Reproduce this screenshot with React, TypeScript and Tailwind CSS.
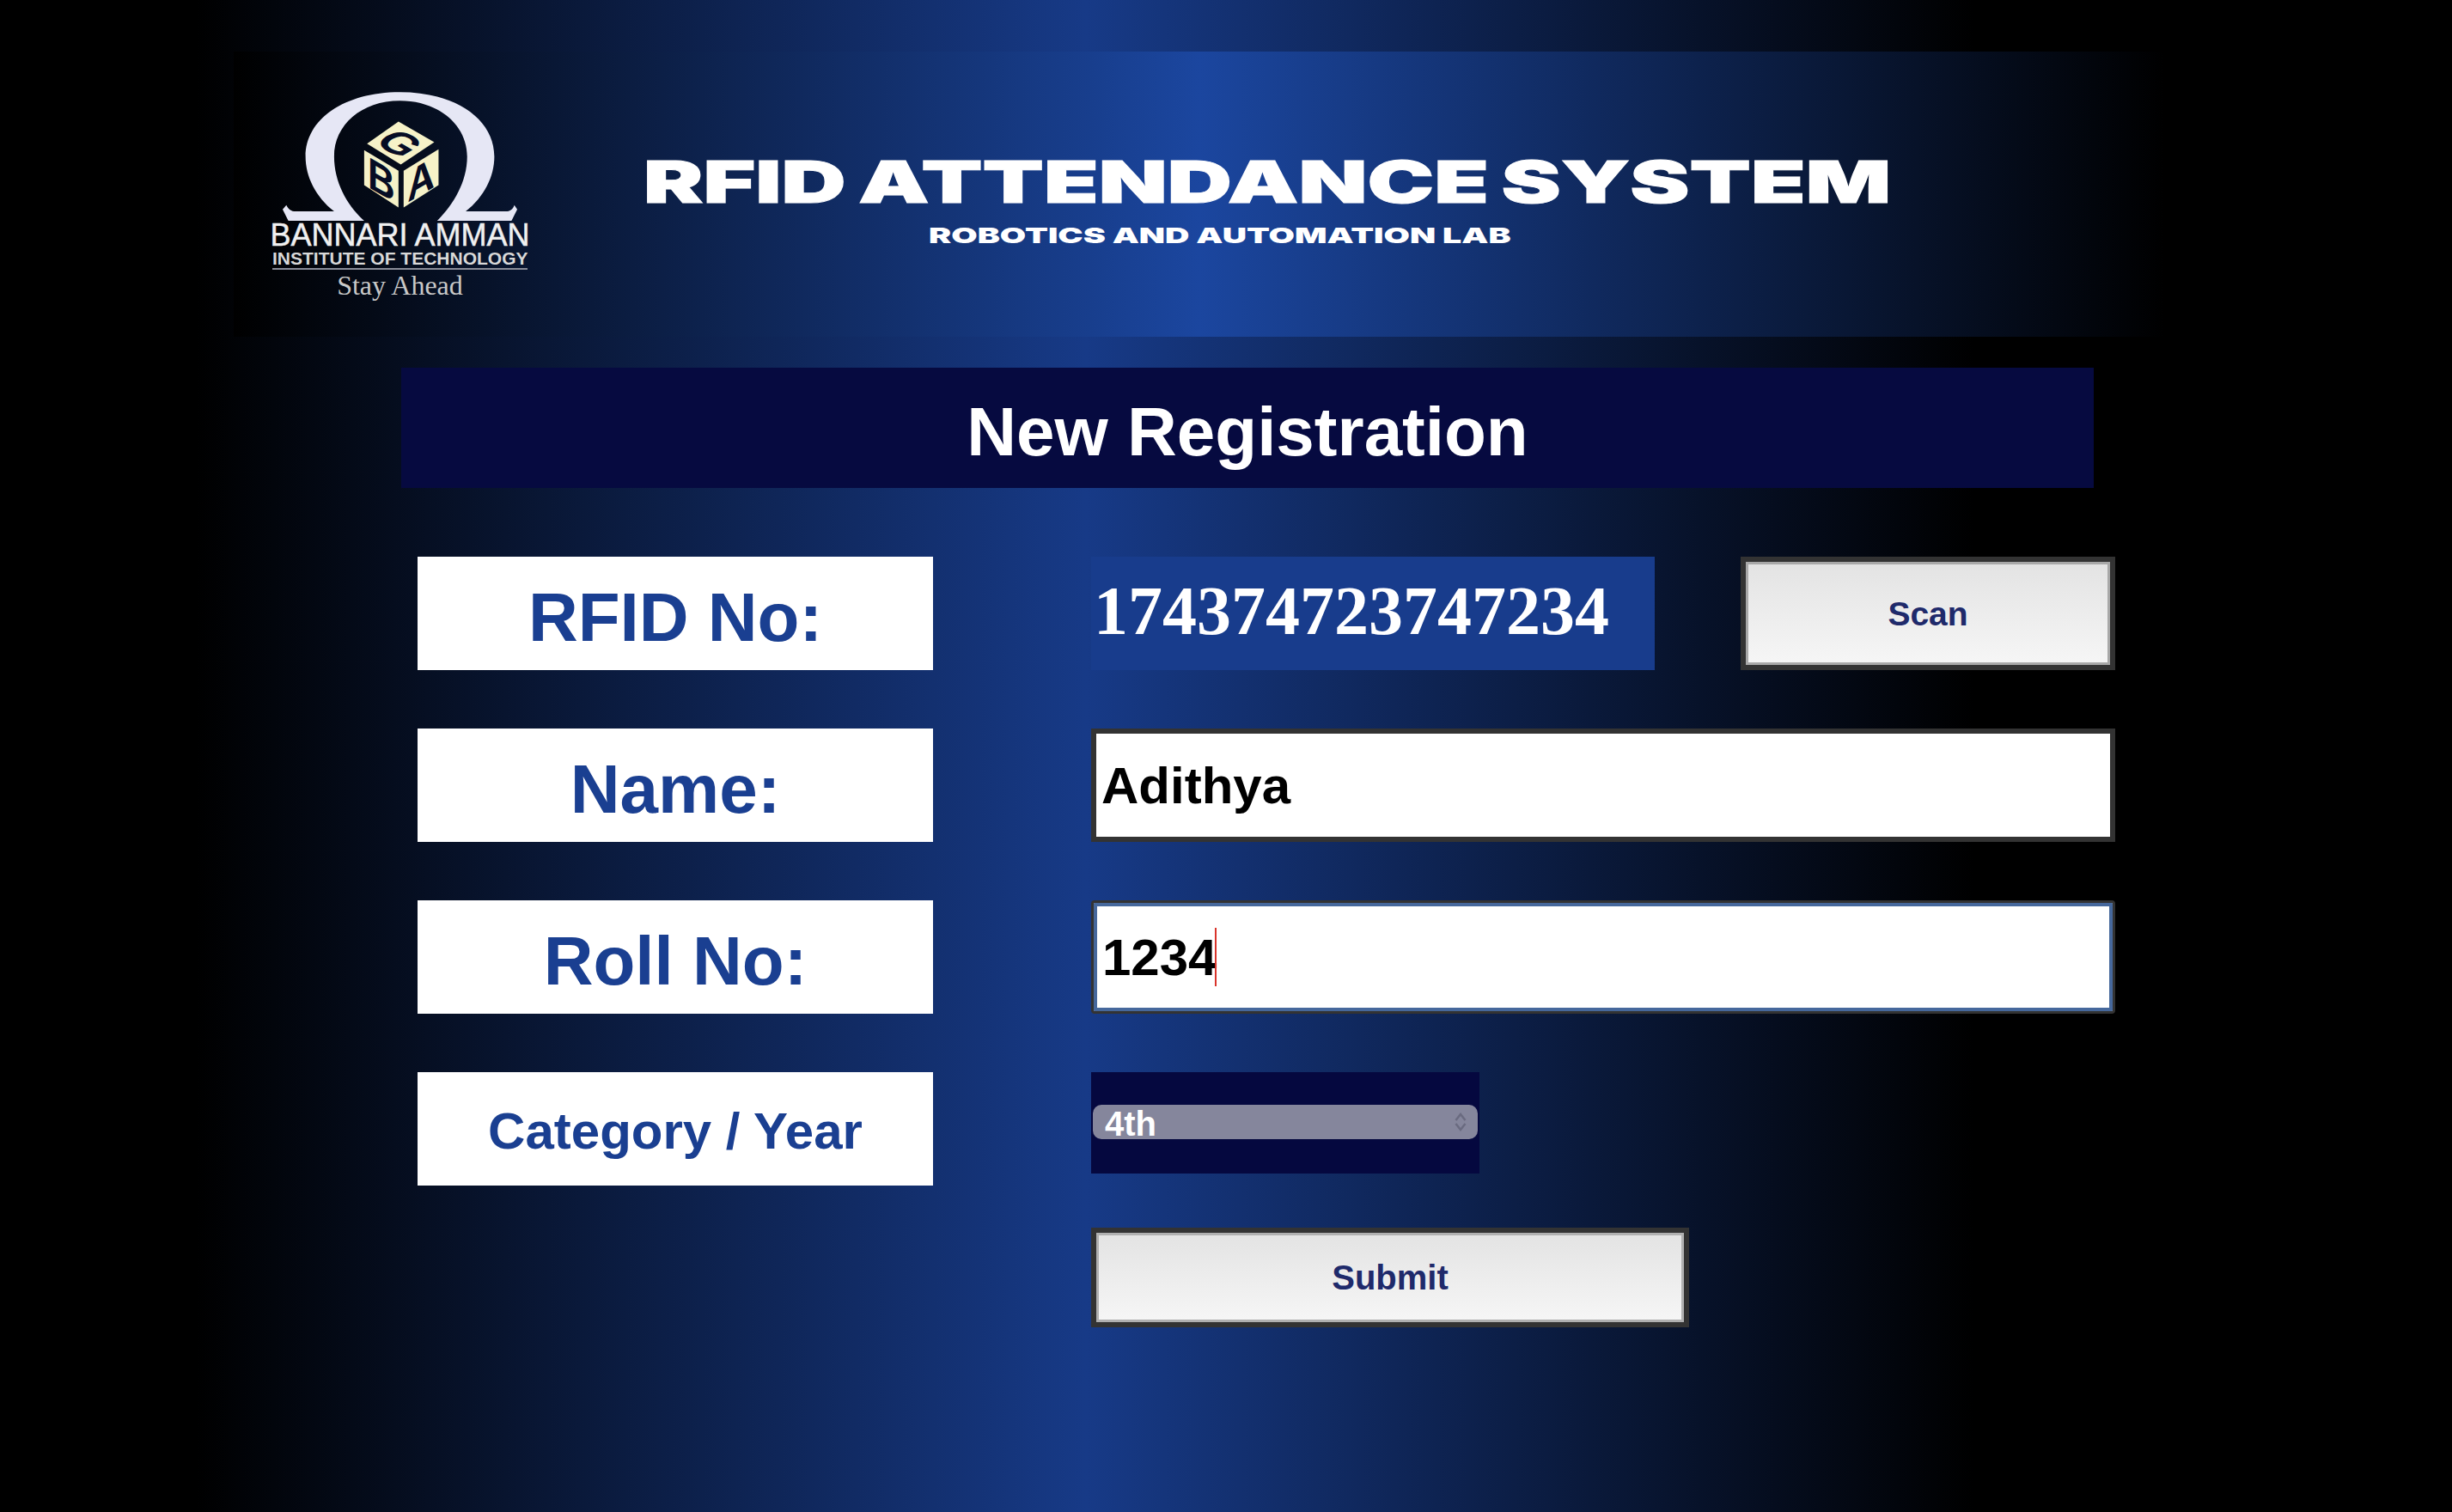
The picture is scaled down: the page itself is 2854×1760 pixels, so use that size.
const FormLabel = ({ text, small }: { text: string; small?: boolean }) => (
  <div className={`w-[600px] h-[132px] bg-white flex items-center justify-center font-bold text-[#1a3f91] ${small ? "text-[60px] pt-1.5" : "text-[80px] pt-[10px]"}`}>
    {text}
  </div>
);

const Logo = () => (
  <div className="w-[297px] flex flex-col items-center text-white">
    <svg viewBox="190 150 850 470" className="w-[283px] h-[157px]">
      <path
        fill="#e6e7f5"
        d="M205 575 L218 560 C225 575 235 582 250 582 L385 582 C320 530 285 460 285 390 C285 260 420 165 615 165 C810 165 945 260 945 390 C945 460 910 530 845 582 L985 582 C1000 582 1010 575 1015 560 L1025 575 L1005 615 L745 615 C800 560 850 480 850 390 C850 280 750 195 615 195 C480 195 385 280 385 390 C385 480 430 560 490 615 L225 615 Z"
      />
      <polygon fill="#f6f2c8" points="500,345 610,268 735,340 618,418" />
      <polygon fill="#f6f2c8" points="490,368 610,440 610,568 490,490" />
      <polygon fill="#f6f2c8" points="628,440 750,365 750,490 628,568" />
      <g fill="#060c24" fontFamily="Liberation Sans, sans-serif" fontWeight="700">
        <text fontSize="150" transform="matrix(0.85 0.5 -0.85 0.5 521 341)">G</text>
        <text fontSize="155" transform="matrix(0.85 0.5 0 1 502 496)">B</text>
        <text fontSize="155" transform="matrix(0.85 -0.5 0 1 641 552)">A</text>
      </g>
    </svg>
    <div className="text-[36px] leading-[34px] -mt-[2px] whitespace-nowrap text-[#f0f0f0] [-webkit-text-stroke:0.5px_#f0f0f0]">BANNARI AMMAN</div>
    <div className="text-[21px] leading-[20px] font-bold whitespace-nowrap text-[#d8d8d8] w-full text-center border-b-2 border-[#8a8d99] pb-[1px]">
      INSTITUTE OF TECHNOLOGY
    </div>
    <div className="font-['Liberation_Serif'] text-[32px] leading-[36px] text-[#c8c8c8]">Stay Ahead</div>
  </div>
);

const Chevrons = () => (
  <svg viewBox="0 0 14 22" className="absolute right-[13px] top-[9px] w-[14px] h-[22px] pointer-events-none" fill="none" stroke="#6a6b80" strokeWidth="2.5">
    <path d="M1.5 9 L7 2 L12.5 9" />
    <path d="M1.5 13 L7 20 L12.5 13" />
  </svg>
);

export default function App() {
  return (
    <div className="w-full h-[1760px] overflow-hidden font-['Liberation_Sans',sans-serif] bg-[linear-gradient(90deg,#000_8%,#173a87_44.3%,#000_80.5%)]">
      <header className="ml-[272px] mt-[60px] inline-flex w-[2248px] h-[332px] items-center pl-[45px] bg-[linear-gradient(90deg,#000_0%,#1b469f_50%,#000_100%)] align-top">
        <Logo />
        <div className="ml-[135px] mt-[14px] flex flex-col font-['Inter'] font-black text-white">
          <h1 className="text-[67px] leading-[67px] origin-left scale-x-[1.552] whitespace-nowrap [word-spacing:-4px] [-webkit-text-stroke:1px_white]">RFID ATTENDANCE SYSTEM</h1>
          <p className="ml-[332px] mt-[14px] text-[25px] leading-[30px] origin-left scale-x-[1.57] whitespace-nowrap">ROBOTICS AND AUTOMATION LAB</p>
        </div>
      </header>

      <div className="ml-[467px] mt-[36px] w-[1970px] h-[140px] bg-[#060a40] flex items-center justify-center pt-[10px] text-[80px] font-bold text-white">
        New Registration
      </div>

      <div className="ml-[486px] mt-[80px] flex gap-[184px]">
        <div className="flex flex-col gap-[68px]">
          <FormLabel text="RFID No:" />
          <FormLabel text="Name:" />
          <FormLabel text="Roll No:" />
          <FormLabel text="Category / Year" small />
        </div>

        <div className="w-[1192px] flex flex-col">
          <div className="flex h-[132px] gap-[100px]">
            <div className="w-[656px] bg-[#183c8c] pl-[3px] pb-[6px] flex items-center font-['Liberation_Serif'] font-bold text-[80px] text-white">
              174374723747234
            </div>
            <button className="w-[436px] pt-[3px] border-[6px] border-[#333] bg-gradient-to-b from-[#e3e3e3] to-[#f6f6f6] shadow-[inset_0_0_0_3px_#a8a8a8] text-[39px] font-bold text-[#1f2a6b]">
              Scan
            </button>
          </div>

          <input
            defaultValue="Adithya"
            className="mt-[68px] h-[132px] border-[6px] border-[#333] bg-white px-[6px] text-[60px] font-bold text-black outline-none"
          />

          <div className="relative mt-[68px] h-[132px]">
            <input
              defaultValue="1234"
              className="w-full h-full border-[3px] border-[#333] shadow-[inset_0_0_0_4px_#46689c] rounded-[4px] bg-white pl-[10px] text-[60px] font-bold text-black outline-none"
            />
            <span className="absolute left-[144px] top-[32px] w-[2px] h-[68px] bg-[#d9342b]" />
          </div>

          <div className="mt-[68px] w-[452px] h-[118px] bg-[#05083f] pt-[38px] px-[2px]">
            <div className="relative">
              <select defaultValue="4th" className="appearance-none w-full h-[40px] rounded-[10px] bg-[#85869c] pl-[14px] pt-[2px] text-[40px] leading-[40px] font-bold text-white outline-none">
                <option>1st</option>
                <option>2nd</option>
                <option>3rd</option>
                <option>4th</option>
              </select>
              <Chevrons />
            </div>
          </div>

          <button className="mt-[63px] w-[696px] h-[116px] border-[6px] border-[#333] bg-gradient-to-b from-[#e3e3e3] to-[#f6f6f6] shadow-[inset_0_0_0_3px_#b0b0b0] text-[40px] font-bold text-[#1f2a6b]">
            Submit
          </button>
        </div>
      </div>
    </div>
  );
}
